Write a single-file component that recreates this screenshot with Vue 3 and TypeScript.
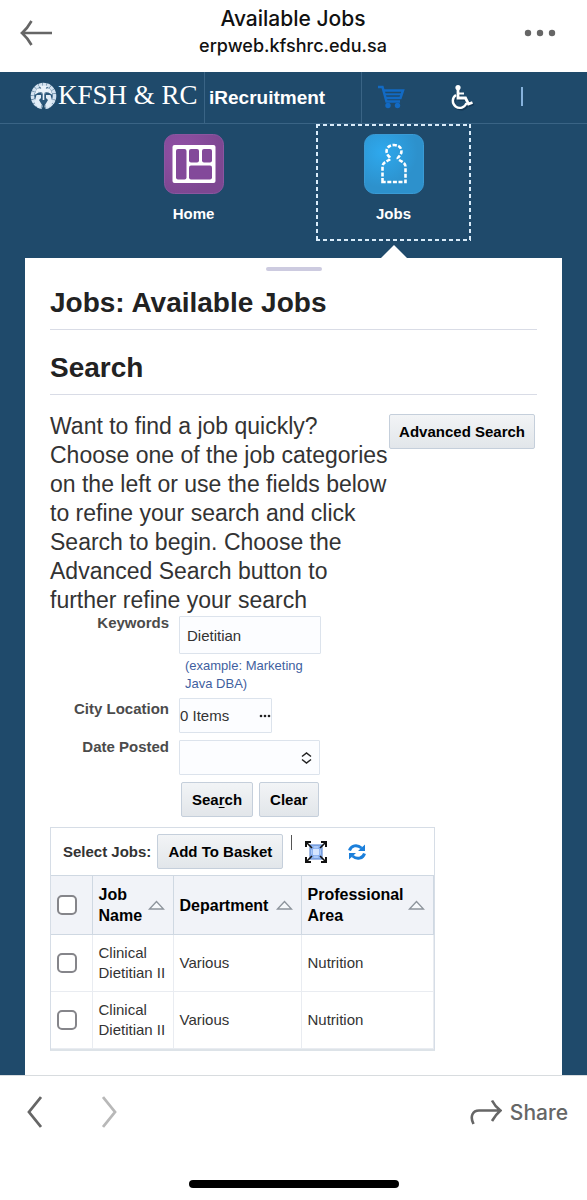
<script setup lang="ts">
import { ref } from 'vue'

interface Job {
  id: number
  name: string
  department: string
  area: string
}

const keywords = ref('Dietitian')
const city = ref('0 Items')
const datePosted = ref('')
const selected = ref<number[]>([])

const columns: { label: string; cls: string }[] = [
  { label: 'Job Name', cls: 'col-name' },
  { label: 'Department', cls: 'col-dept' },
  { label: 'Professional Area', cls: 'col-area' },
]

const jobs: Job[] = [
  { id: 1, name: 'Clinical Dietitian II', department: 'Various', area: 'Nutrition' },
  { id: 2, name: 'Clinical Dietitian II', department: 'Various', area: 'Nutrition' },
]

function toggleAll(event: Event) {
  selected.value = (event.target as HTMLInputElement).checked ? jobs.map((j) => j.id) : []
}

function clearForm() {
  keywords.value = ''
  datePosted.value = ''
}
</script>

<template>
  <div class="page">
    <header class="topbar">
      <button class="icon-btn" type="button" aria-label="Back">
        <svg width="32" height="26" viewBox="0 0 32 26" fill="none" stroke="#666" stroke-width="2.6">
          <path d="M32 13H2M11.500 1C9 5.500 6 9.500 2 13c4 3.500 7 7.500 9.500 12" />
        </svg>
      </button>
      <div class="titles">
        <div class="title">Available Jobs</div>
        <div class="host">erpweb.kfshrc.edu.sa</div>
      </div>
      <button class="icon-btn" type="button" aria-label="More">
        <svg width="32" height="8" viewBox="0 0 32 8" fill="#666">
          <circle cx="4" cy="4" r="3.200" /><circle cx="16" cy="4" r="3.200" /><circle cx="28" cy="4" r="3.200" />
        </svg>
      </button>
    </header>

    <div class="brandbar">
      <div class="logo">
        <svg width="27" height="28" viewBox="0 0 27 28">
          <ellipse cx="13.500" cy="14" rx="11" ry="11.500" fill="#2c587b" stroke="#d3e2f0" stroke-width="3.600" stroke-dasharray="3.600 .4" />
          <path d="M13.500 10v8M13.500 10C10 5 7 7 6 11c3-2 5-2 7.500-1ZM13.500 10C17 5 20 7 21 11c-3-2-5-2-7.500-1ZM13.500 9 11 4.500h5Z" fill="#eaf3fb" stroke="#eaf3fb" stroke-width="1.600" />
          <path d="M6.500 13H11v3l-2 2 3 5-4 3-3.500-6ZM20.500 13H16v3l2 2-3 5 4 3 3.500-6Z" fill="#e2edf7" />
          <path d="M11.500 28l2-7 2 7Z" fill="#1f4a6b" />
        </svg>
        <span>KFSH &amp; RC</span>
      </div>
      <div class="product">iRecruitment</div>
      <div class="tools">
        <button class="icon-btn" type="button" aria-label="Shopping basket">
          <svg width="28" height="24" viewBox="0 0 28 24" fill="none" stroke="#126ac4">
            <path d="M1 2h4.500l4 14.500H23" stroke-width="2.500" />
            <path d="M6 5.500h20L23.500 13H9" stroke-width="2.500" />
            <path d="M8 9.300h16" stroke-width="2" />
            <circle cx="11" cy="20.500" r="2.700" fill="#126ac4" stroke="none" />
            <circle cx="20.500" cy="20.500" r="2.700" fill="#126ac4" stroke="none" />
          </svg>
        </button>
        <button class="icon-btn" type="button" aria-label="Accessibility">
          <svg width="24" height="28" viewBox="0 0 24 28" fill="none">
            <g stroke="#0d2c47" stroke-width="2.600" opacity=".6" transform="translate(1.200 1.400)">
              <path d="M7 6v9h7.500l3 6 4-1.500" /><path d="M5 12a7 7 0 1 0 10.500 8" />
            </g>
            <circle cx="7" cy="4.500" r="2.600" fill="#fff" />
            <path d="M7 6v9h7.500l3 6 4-1.500" stroke="#fff" stroke-width="2.800" />
            <path d="M7 10.500h6" stroke="#fff" stroke-width="2" />
            <path d="M5 12a7 7 0 1 0 10.500 8" stroke="#fff" stroke-width="2.400" />
          </svg>
        </button>
        <span class="bar"></span>
      </div>
    </div>

    <nav class="nav">
      <a class="nav-item" href="#home">
        <svg width="60" height="60" viewBox="0 0 60 60">
          <defs>
            <radialGradient id="gh" cx=".3" cy=".3" r=".7"><stop offset="0" stop-color="#9150a6" /><stop offset="1" stop-color="#7d4791" /></radialGradient>
          </defs>
          <rect x=".5" y=".5" width="59" height="59" rx="10" fill="url(#gh)" stroke="#8b56a0" />
          <rect x="8.500" y="11" width="43" height="38" rx="2" fill="#fff" />
          <g fill="#83499a">
            <rect x="12" y="15" width="10.500" height="30.500" rx="2" />
            <rect x="25" y="15" width="10" height="13.500" rx="2" />
            <rect x="38" y="15" width="10" height="13.500" rx="2" />
            <rect x="25" y="31.500" width="23" height="14" rx="2" />
          </g>
        </svg>
        <span>Home</span>
      </a>
      <a class="nav-item active" href="#jobs">
        <svg width="60" height="60" viewBox="0 0 60 60">
          <defs>
            <radialGradient id="gj" cx=".3" cy=".3" r=".6"><stop offset="0" stop-color="#2ea9ee" /><stop offset="1" stop-color="#2d91cc" /></radialGradient>
          </defs>
          <rect x=".5" y=".5" width="59" height="59" rx="10" fill="url(#gj)" stroke="#3a9bd5" />
          <path d="M18.500 48V33c0-4 3-5 5.500-6.500S27 24.500 25 22.500c-5-5-2-11.500 5-11.500s10 6.500 5 11.500c-2 2-1.500 2.500 1 4S41.500 29 41.500 33v15Z" fill="none" stroke="#fff" stroke-width="2.600" stroke-dasharray="4 1.600" />
        </svg>
        <span>Jobs</span>
      </a>
    </nav>

    <main class="stage">
      <div class="panel">
        <div class="grip"></div>
        <h1>Jobs: Available Jobs</h1>
        <h2>Search</h2>

        <div class="intro">
          <p>
            Want to find a job quickly? Choose one of the job categories on the left or use the fields below to refine
            your search and click Search to begin. Choose the Advanced Search button to further refine your search
          </p>
          <button class="btn" type="button">Advanced Search</button>
        </div>

        <form class="form" @submit.prevent>
          <label for="kw">Keywords</label>
          <div>
            <input id="kw" v-model="keywords" class="field keywords" type="text" />
            <div class="hint">(example: Marketing Java DBA)</div>
          </div>
          <label class="city-label" for="city">City Location</label>
          <div class="field city">
            <input id="city" v-model="city" type="text" />
            <button type="button" aria-label="Choose city">
              <svg width="12" height="4" viewBox="0 0 12 4" fill="#222">
                <circle cx="2" cy="2" r="1.300" /><circle cx="6" cy="2" r="1.300" /><circle cx="10" cy="2" r="1.300" />
              </svg>
            </button>
          </div>
          <label for="date">Date Posted</label>
          <div class="select">
            <select id="date" v-model="datePosted" class="field"><option value=""></option></select>
            <svg width="11" height="12" viewBox="0 0 11 12" fill="none" stroke="#222" stroke-width="1.500">
              <path d="M1 4.500 5.500 1 10 4.500M1 7.500 5.500 11 10 7.500" />
            </svg>
          </div>
          <div class="actions">
            <button class="btn" type="submit">Sea<u>r</u>ch</button>
            <button class="btn" type="button" @click="clearForm">Clear</button>
          </div>
        </form>

        <section class="results">
          <div class="toolbar">
            <span class="select-label">Select Jobs:</span>
            <button class="btn" type="button">Add To Basket</button>
            <span class="sep"></span>
            <button class="icon-btn expand" type="button" aria-label="Expand table">
              <svg width="22" height="22" viewBox="0 0 22 22">
                <rect x="5" y="4" width="12" height="14" fill="#a9c8f8" stroke="#4777c9" />
                <path d="M5 8h12M5 14h12M8 4v14M14 4v14" stroke="#7fa6ea" />
                <rect x="8" y="8" width="6" height="6" fill="#d5e5ff" />
                <path d="m2 2 5 5M20 2l-5 5M2 20l5-5M20 20l-5-5" stroke="#111" stroke-width="1.600" />
                <path d="M1 6V1h5M16 1h5v5M1 16v5h5M16 21h5v-5" fill="none" stroke="#111" stroke-width="2" />
              </svg>
            </button>
            <button class="icon-btn" type="button" aria-label="Refresh">
              <svg width="18" height="18" viewBox="0 0 18 18">
                <path d="M1.500 7.500C3 2.500 9 1 13.500 5M16.500 10.500C15 15.500 9 17 4.500 13" fill="none" stroke="#1b7fdb" stroke-width="3" />
                <path d="M17 1.500V8h-7ZM1 16.500V10h7Z" fill="#1b7fdb" />
              </svg>
            </button>
          </div>
          <table>
            <thead>
              <tr>
                <th class="col-check">
                  <input type="checkbox" aria-label="Select all" :checked="selected.length === jobs.length" @change="toggleAll" />
                </th>
                <th v-for="c in columns" :key="c.label" :class="c.cls">
                  <div class="head">
                    <span>{{ c.label }}</span>
                    <svg width="17" height="10" viewBox="0 0 17 10"><path d="M1.500 9 8.500 1.500 15.500 9Z" fill="#f6f8fb" stroke="#8d949c" stroke-width="1.300" /></svg>
                  </div>
                </th>
              </tr>
            </thead>
            <tbody>
              <tr v-for="job in jobs" :key="job.id">
                <td class="col-check"><input v-model="selected" type="checkbox" :value="job.id" :aria-label="job.name" /></td>
                <td>{{ job.name }}</td>
                <td>{{ job.department }}</td>
                <td>{{ job.area }}</td>
              </tr>
            </tbody>
          </table>
        </section>
      </div>
    </main>

    <footer class="bottombar">
      <div class="controls">
        <button class="icon-btn" type="button" aria-label="Previous page">
          <svg width="16" height="32" viewBox="0 0 16 32" fill="none" stroke="#666" stroke-width="2.800"><path d="M15 1 3 16l12 15" /></svg>
        </button>
        <button class="icon-btn" type="button" aria-label="Next page">
          <svg width="16" height="32" viewBox="0 0 16 32" fill="none" stroke="#b8b8b8" stroke-width="2.800"><path d="m1 1 12 15L1 31" /></svg>
        </button>
        <button class="share" type="button">
          <svg width="32" height="26" viewBox="0 0 32 26" fill="none" stroke="#666" stroke-width="2.600">
            <path d="M3.500 25C-.5 17 3 11.500 9 11.500h21M22 1.500c2 4 5 7.500 8.500 10-3.500 3-6 6-8.500 10.500" />
          </svg>
          Share
        </button>
      </div>
      <div class="indicator"></div>
    </footer>
  </div>
</template>

<style>
body {
  margin: 0;
}
</style>

<style scoped>
.page {
  min-height: 100vh;
  display: flex;
  flex-direction: column;
  background: #fff;
  font-family: 'Liberation Sans', Arial, sans-serif;
  font-size: 15px;
  color: #333;
}

.page *,
.page {
  box-sizing: border-box;
}

button,
input,
select {
  font: inherit;
  color: inherit;
  margin: 0;
}

svg {
  display: block;
  flex: none;
}

.icon-btn {
  padding: 0;
  border: 0;
  background: none;
}

.topbar {
  height: 72px;
  padding: 0 31px 6px 20px;
  display: flex;
  align-items: center;
  justify-content: space-between;
  font-family: Inter, sans-serif;
  font-weight: 500;
  color: #111;
}

.titles {
  flex: 1;
  padding-left: 10px;
  text-align: center;
}

.title {
  font-size: 21px;
  line-height: 26px;
}

.host {
  font-size: 18px;
  line-height: 28px;
}

.brandbar {
  height: 52px;
  display: flex;
  background: #1f4a6b;
  border-bottom: 1px solid #3a6485;
  color: #fff;
}

.logo {
  width: 205px;
  padding: 0 0 4px 30px;
  display: flex;
  align-items: center;
  gap: 1px;
  border-right: 1px solid #3a6485;
  font-family: 'Liberation Serif', serif;
  font-size: 27px;
  white-space: nowrap;
}

.product {
  width: 157px;
  padding-left: 4px;
  border-right: 1px solid #3a6485;
  font-size: 19px;
  font-weight: 700;
  line-height: 51px;
}

.tools {
  flex: 1;
  display: flex;
  align-items: center;
  padding: 0 0 2px 15px;
  gap: 46px;
}

.bar {
  width: 2px;
  height: 19px;
  background: #86b2dc;
}

.nav {
  height: 134px;
  display: flex;
  justify-content: center;
  gap: 45px;
  background: #1f4a6b;
}

.nav-item {
  position: relative;
  width: 155px;
  height: 117px;
  padding-top: 10px;
  display: flex;
  flex-direction: column;
  align-items: center;
  gap: 10px;
  color: #fff;
  font-weight: 700;
  line-height: 20px;
  text-decoration: none;
}

.nav-item.active {
  --dash: #d9ecfa 0 4px, transparent 4px 7px;
  background:
    repeating-linear-gradient(90deg, var(--dash)) top / 100% 2px no-repeat,
    repeating-linear-gradient(90deg, var(--dash)) bottom / 100% 2px no-repeat,
    repeating-linear-gradient(var(--dash)) left / 2px 100% no-repeat,
    repeating-linear-gradient(var(--dash)) right / 2px 100% no-repeat;
}

.nav-item.active::after {
  content: '';
  position: absolute;
  top: 121px;
  left: 65px;
  border: 13px solid transparent;
  border-top-width: 0;
  border-bottom-color: #fff;
}

.stage {
  flex: 1;
  padding: 0 25px;
  display: flex;
  background: #1f4a6b;
}

.panel {
  flex: 1;
  padding: 9px 25px 24px;
  background: #fff;
}

.grip {
  width: 56px;
  height: 4px;
  margin: 0 auto;
  border-radius: 2px;
  background: #cdcbe0;
}

h1,
h2 {
  margin: 0;
  font-size: 28px;
  line-height: 32px;
  color: #222;
  border-bottom: 1px solid #d9dce6;
}

h1 {
  padding: 16px 0 10px;
}

h2 {
  padding: 22px 0 10px;
}

.intro {
  display: flex;
  align-items: flex-start;
  justify-content: space-between;
  padding: 17px 2px 0 0;
}

.intro p {
  flex: 1;
  margin: 0;
  font-size: 23px;
  line-height: 29px;
}

.intro .btn {
  margin-top: 2px;
  padding: 0 9px;
}

.btn {
  height: 35px;
  padding: 0 10px;
  border: 1px solid #c5cfdb;
  border-radius: 2px;
  background: linear-gradient(#f2f4f6, #e2e6ea);
  color: #000;
  font-weight: 700;
  white-space: nowrap;
}

.form {
  display: grid;
  grid-template-columns: 119px 150px;
  column-gap: 10px;
  padding-top: 1px;
}

.form label {
  text-align: right;
  font-weight: 700;
  line-height: 14px;
  color: #4b4b4b;
}

.form .city-label {
  padding-top: 4px;
}

.field {
  border: 1px solid #dce3ec;
  border-radius: 1px;
  background: #fcfdff;
}

.keywords {
  display: block;
  width: 142px;
  height: 38px;
  padding: 0 7px;
}

.hint {
  padding: 3px 6px 5px;
  font-size: 13px;
  line-height: 18px;
  color: #3f5f9f;
}

.city {
  display: flex;
  align-items: center;
  width: 93px;
  height: 35px;
  margin-bottom: 7px;
}

.city input {
  flex: 1;
  min-width: 0;
  padding: 0;
  border: 0;
  background: none;
}

.city button {
  padding: 0;
  border: 0;
  background: none;
}

.select {
  position: relative;
  width: 141px;
}

.select select {
  display: block;
  width: 100%;
  height: 35px;
  appearance: none;
}

.select svg {
  position: absolute;
  right: 8px;
  top: 12px;
  pointer-events: none;
}

.actions {
  grid-column: 2;
  display: flex;
  gap: 6px;
  padding: 7px 0 10px 2px;
}

.actions u {
  text-underline-offset: 2px;
}

.results {
  width: 385px;
  border: 1px solid #d6dde6;
  border-bottom: 2px solid #dde3e8;
}

.toolbar {
  height: 47px;
  padding-left: 12px;
  display: flex;
  align-items: center;
}

.select-label {
  margin-right: 6px;
  font-weight: 700;
}

.sep {
  width: 1px;
  height: 15px;
  margin: 0 13px 18px 8px;
  background: #555;
}

.expand {
  margin-right: 21px;
}

table {
  width: 383px;
  border-collapse: collapse;
  table-layout: fixed;
}

th {
  height: 59px;
  padding: 0 8px 0 6px;
  background: #f1f3f8;
  border: 1px solid #cfd8e2;
  border-left-width: 0;
  font-size: 16px;
  line-height: 21px;
  text-align: left;
  color: #000;
}

td {
  height: 57px;
  padding: 0 0 0 6px;
  border: 1px solid #e9ecf1;
  border-left-width: 0;
  line-height: 20px;
}

.head {
  display: flex;
  align-items: center;
  justify-content: space-between;
}

.col-check {
  width: 41px;
  padding: 0 6px;
}

.col-name {
  width: 81px;
}

.col-dept {
  width: 128px;
}

input[type='checkbox'] {
  display: block;
  appearance: none;
  width: 20px;
  height: 20px;
  border: 2px solid #85858a;
  border-radius: 5px;
  background: #fff;
}

input[type='checkbox']:checked {
  background: #1b7fdb;
}

.bottombar {
  height: 125px;
  padding: 20px 0 12px;
  display: flex;
  flex-direction: column;
  align-items: center;
  justify-content: space-between;
  border-top: 1px solid #d8dcdf;
}

.controls {
  align-self: stretch;
  padding: 0 19px 0 26px;
  display: flex;
  align-items: center;
  gap: 60px;
}

.share {
  margin-left: auto;
  padding: 0;
  display: flex;
  align-items: center;
  gap: 8px;
  border: 0;
  background: none;
  font-family: Inter, sans-serif;
  font-size: 21px;
  font-weight: 500;
  color: #666;
}

.indicator {
  width: 210px;
  height: 8px;
  border-radius: 4px;
  background: #000;
}
</style>
